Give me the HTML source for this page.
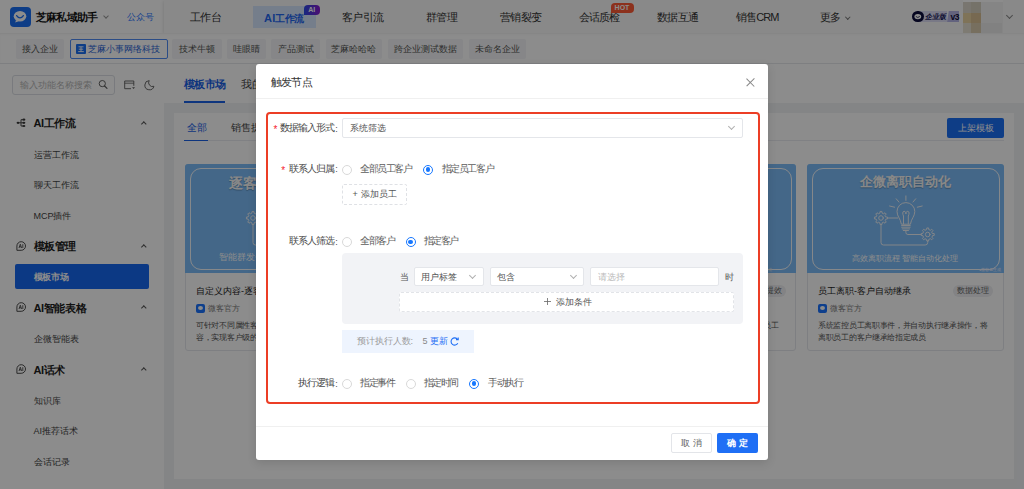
<!DOCTYPE html>
<html><head><meta charset="utf-8">
<style>
*{box-sizing:border-box;margin:0;padding:0}
html,body{width:1024px;height:489px;overflow:hidden}
body{position:relative;background:#f0f2f5;font-family:"Liberation Sans",sans-serif;color:#333}
.a{position:absolute}
.t{position:absolute;white-space:nowrap;line-height:1}
svg{position:absolute;overflow:visible}
/* top nav */
#top{position:absolute;left:0;top:0;width:1024px;height:33px;background:#fff}
#navr{position:absolute;left:164px;top:0;width:860px;height:33px;background:#fafafa;box-shadow:-1px 1px 3px rgba(0,0,0,.1)}
.nav{position:absolute;top:12px;font-size:11px;color:#333;line-height:11px;letter-spacing:-0.7px;white-space:nowrap}
#row2{position:absolute;left:0;top:33px;width:1024px;height:31px;background:#fff;border-bottom:1px solid #e6e8ec;box-shadow:inset 0 2px 3px -2px rgba(0,0,0,.12)}
.tag{position:absolute;top:6px;height:19.5px;background:#f4f5f7;border-radius:2px;font-size:9px;color:#555;line-height:21.5px;text-align:center;white-space:nowrap}
#side{position:absolute;left:0;top:64px;width:164px;height:425px;background:#fff}
.sg{position:absolute;left:33.5px;font-size:11px;font-weight:bold;color:#1f1f1f;line-height:11px;letter-spacing:-0.4px;white-space:nowrap}
.si{position:absolute;left:33.5px;font-size:9px;color:#444;line-height:9px;white-space:nowrap}
.chu{position:absolute;left:141.5px;width:3.6px;height:3.6px;border-left:1px solid #555;border-top:1px solid #555;transform:rotate(45deg)}
#hdr{position:absolute;left:164px;top:64px;width:860px;height:39px;background:#fff}
#panel{position:absolute;left:174px;top:112.5px;width:840px;height:366px;background:#fff}
.card{position:absolute;top:51.5px;width:196.5px;height:187px;border:1px solid #e6e8ed;border-radius:3px;background:#fff}
.cimg{position:absolute;left:-1px;top:-1px;width:196.5px;height:109px;background:#7cbcf8;border-radius:3px 3px 0 0;overflow:hidden}
.cin{position:absolute;left:5px;top:3.6px;width:187.5px;height:102.5px;border:1.5px solid #f4f8fc;border-radius:11px}
.ctit{position:absolute;left:0;width:196px;top:10.5px;text-align:center;font-size:13px;font-weight:bold;color:#f7f7f7;line-height:13px;text-shadow:0 1px 1px rgba(0,0,0,.25);white-space:nowrap}
.csub{position:absolute;left:0;width:196px;top:90.5px;text-align:center;font-size:8px;color:#fff;line-height:8px;white-space:nowrap}
.cname{position:absolute;left:10px;top:121.5px;font-size:9px;color:#222;line-height:9px;white-space:nowrap}
.ctag{position:absolute;top:119.5px;height:12.5px;background:#eeeff2;border-radius:6px;font-size:8px;color:#666;line-height:12.5px;text-align:center;white-space:nowrap}
.cic{position:absolute;left:10px;top:139px;width:8.5px;height:8.5px;background:#1a73ff;border-radius:2px}.cic::after{content:"";position:absolute;left:1.8px;top:2.2px;width:5px;height:3.8px;border-radius:50%;background:#fff}
.cof{position:absolute;left:22px;top:140px;font-size:8px;color:#777;line-height:8px;white-space:nowrap}
.cdesc{position:absolute;left:10px;top:155px;width:180px;font-size:8px;color:#555;line-height:11.8px;letter-spacing:-0.3px}
#mask{position:absolute;left:0;top:0;width:1024px;height:489px;background:rgba(0,0,0,.45)}
#modal{position:absolute;left:256px;top:64px;width:512px;height:395.5px;background:#fff;border-radius:3px;box-shadow:0 3px 10px rgba(0,0,0,.12)}
.lbl{position:absolute;font-size:10px;color:#4a4a4a;line-height:9px;white-space:nowrap;letter-spacing:-0.9px;margin-top:-0.8px}
.req{position:absolute;font-size:10px;color:#f5222d;line-height:10px}
.radio{position:absolute;width:10px;height:10px;border:1px solid #d9d9d9;border-radius:50%;background:#fff}
.radio.on{border-color:#1677ff}
.radio.on::after{content:"";position:absolute;left:1.7px;top:1.7px;width:4.6px;height:4.6px;border-radius:50%;background:#1677ff}
.rt{position:absolute;font-size:10px;color:#5c5c5c;line-height:9px;white-space:nowrap;letter-spacing:-1.4px;margin-top:-0.8px}
.sel{position:absolute;background:#fff;border:1px solid #e4e6ea;border-radius:2px}
.dchev{position:absolute;width:5px;height:5px;border-right:1px solid #b0b0b0;border-bottom:1px solid #b0b0b0;transform:rotate(45deg)}
</style></head><body>

<!-- ============ TOP NAV ============ -->
<div id="top">
  <div class="a" style="left:10px;top:7px;width:20.5px;height:19.5px;background:#1a6ff5;border-radius:4px"></div>
  <svg style="left:10.2px;top:7px" width="20" height="20" viewBox="0 0 20 20">
    <ellipse cx="10" cy="9.2" rx="6.3" ry="5.3" fill="#fff"/>
    <path d="M6 13 L5.2 15.6 L8.6 14.2 Z" fill="#fff"/>
    <path d="M6.6 8.6 Q10 13.2 13.4 8.6" fill="none" stroke="#1a6ff5" stroke-width="1.3" stroke-linecap="round"/>
  </svg>
  <div class="t" style="left:36px;top:12px;font-size:10.5px;font-weight:bold;color:#141414;letter-spacing:-0.8px">芝麻私域助手</div>
  <div class="a" style="left:103.5px;top:14px;width:4px;height:4px;border-right:1px solid #999;border-bottom:1px solid #999;transform:rotate(45deg)"></div>
  <div class="t" style="left:127px;top:12.5px;font-size:9px;color:#2b78ff">公众号</div>
</div>
<div id="navr">
  <div class="nav" style="left:26px">工作台</div>
  <div class="a" style="left:88.5px;top:5.5px;width:63px;height:22.5px;background:#d6e6fd"></div>
  <div class="nav" style="left:100px;top:12.8px;color:#1f66f0;font-weight:bold;font-size:10px;letter-spacing:-0.5px"><span style="letter-spacing:0.2px;font-size:11px">AI</span>工作流</div>
  <div class="a" style="left:140px;top:5px;width:15.5px;height:10px;background:linear-gradient(90deg,#2a4ae8,#8a1ad0);border-radius:4px 4px 4px 0;color:#fff;font-size:7px;font-weight:bold;line-height:10px;text-align:center">AI</div>
  <div class="nav" style="left:178px">客户引流</div>
  <div class="nav" style="left:262px">群管理</div>
  <div class="nav" style="left:336px">营销裂变</div>
  <div class="nav" style="left:414.5px">会话质检</div>
  <div class="a" style="left:446.5px;top:2.5px;width:23px;height:10px;background:#ff5a35;border-radius:4px 4px 4px 0;color:#fff;font-size:7px;font-weight:bold;line-height:10px;text-align:center">HOT</div>
  <div class="nav" style="left:493px">数据互通</div>
  <div class="nav" style="left:572px;letter-spacing:-0.9px">销售CRM</div>
  <div class="nav" style="left:655.5px">更多</div>
  <div class="a" style="left:682px;top:14.5px;width:3.5px;height:3.5px;border-right:1px solid #777;border-bottom:1px solid #777;transform:rotate(45deg)"></div>
  <!-- enterprise badge -->
  <div class="a" style="left:757px;top:10.6px;width:26px;height:11.7px;background:#dcdcf5"></div>
  <div class="a" style="left:783px;top:10.6px;width:12.2px;height:11.7px;background:#b4b4e6;clip-path:polygon(15% 0,100% 0,100% 100%,0 100%)"></div>
  <div class="a" style="left:748px;top:10.8px;width:11.6px;height:11.6px;background:#0b0b3b;border-radius:50%"></div>
  <svg style="left:748px;top:10.8px" width="12" height="12" viewBox="0 0 12 12">
    <ellipse cx="5.8" cy="5.6" rx="3.4" ry="2.6" fill="#fff"/>
    <path d="M3.8 5.4 Q5.8 7.6 7.8 5.4" fill="none" stroke="#0b0b3b" stroke-width="0.8"/>
  </svg>
  <div class="t" style="left:761.5px;top:12.8px;font-size:7px;font-weight:bold;color:#1a1a5a;letter-spacing:0px;transform:skewX(-14deg)">企业版</div>
  <div class="t" style="left:786.5px;top:12.5px;font-size:8.5px;font-weight:bold;color:#10103a;letter-spacing:-0.5px">v3</div>
  <!-- mosaic avatar -->
  <div class="a" style="left:799px;top:0;width:39.5px;height:33px;background:#f2f2f2"></div>
  <div class="a" style="left:799px;top:2px;width:8px;height:11px;background:#ddd8cc"></div>
  <div class="a" style="left:807px;top:2px;width:10px;height:11px;background:#d6cfbf"></div>
  <div class="a" style="left:799px;top:13px;width:8px;height:10px;background:#e8d2a0"></div>
  <div class="a" style="left:807px;top:13px;width:10px;height:10px;background:#d9c094"></div>
  <div class="a" style="left:799px;top:23px;width:8px;height:10px;background:#e6e0d2"></div>
  <div class="a" style="left:807px;top:23px;width:10px;height:10px;background:#d9cbae"></div>
  <div class="a" style="left:817px;top:23px;width:21px;height:10px;background:#ebebeb"></div>
  <div class="a" style="left:799px;top:0;width:39.5px;height:1.5px;background:#fff"></div>
  <div class="a" style="left:842.5px;top:13px;width:5px;height:5px;border-right:1px solid #888;border-bottom:1px solid #888;transform:rotate(45deg)"></div>
</div>

<div id="row2">
  <div class="tag" style="left:16px;width:48px">接入企业</div>
  <div class="tag" style="left:69.5px;top:5.5px;width:98px;height:20.5px;background:#fff;border:1px solid #4f8af5;color:#2c66d6;line-height:19px;text-align:left;padding-left:17.5px">芝麻小事网络科技</div>
  <div class="a" style="left:76px;top:10.5px;width:10px;height:10px;background:#1a6ff5;border-radius:1px"></div>
  <svg style="left:76px;top:10.5px" width="10" height="10" viewBox="0 0 10 10"><path d="M2.5 2.8 H7.5 M5 2.8 V7.6 M2.8 5.2 H7.2 M2.2 7.6 H7.8" stroke="#fff" stroke-width="0.9"/></svg>
  <div class="tag" style="left:171.5px;width:50px">技术牛顿</div>
  <div class="tag" style="left:226.5px;width:39px">哇眼睛</div>
  <div class="tag" style="left:271px;width:49px">产品测试</div>
  <div class="tag" style="left:325.5px;width:56px">芝麻哈哈哈</div>
  <div class="tag" style="left:387.5px;width:75px">跨企业测试数据</div>
  <div class="tag" style="left:468.5px;width:57px">未命名企业</div>
</div>

<!-- ============ SIDEBAR ============ -->
<div id="side">
  <div class="a" style="left:12px;top:11px;width:102.5px;height:19.5px;border:1px solid #dcdfe5;border-radius:3px"></div>
  <div class="t" style="left:19.5px;top:16.5px;font-size:9px;color:#b5b5b5">输入功能名称搜索</div>
  <svg style="left:98px;top:15px" width="12" height="12" viewBox="0 0 12 12">
    <circle cx="4.3" cy="4.6" r="3.1" fill="none" stroke="#5a5a5a" stroke-width="0.95"/>
    <path d="M6.6 7 L9 9.4" stroke="#5a5a5a" stroke-width="1.1" stroke-linecap="round"/>
  </svg>
  <svg style="left:124px;top:16px" width="12" height="10" viewBox="0 0 12 10">
    <path d="M9.8 5.8 V1 H0.7 V8.7 H7" fill="none" stroke="#5a5a5a" stroke-width="0.9"/>
    <path d="M0.7 3.2 H9.8" stroke="#5a5a5a" stroke-width="0.8"/>
    <path d="M8.1 7.2 H11 L9.55 8.9 Z" fill="#5a5a5a"/>
  </svg>
  <svg style="left:144px;top:15.5px" width="11" height="11" viewBox="0 0 11 11">
    <path d="M5.2 0.6 A4.6 4.6 0 1 0 9.9 6.3 A3.9 3.9 0 0 1 5.2 0.6 Z" fill="none" stroke="#5a5a5a" stroke-width="0.9" stroke-linejoin="round"/>
  </svg>

  <svg style="left:15.5px;top:54px" width="10" height="10" viewBox="0 0 10 10">
    <ellipse cx="2" cy="4.8" rx="1.4" ry="1.1" fill="#3a3a3a"/>
    <path d="M2 4.8 H7 M5 1.7 V8 M5 1.7 H7 M5 8 H7" fill="none" stroke="#3a3a3a" stroke-width="0.9"/>
    <ellipse cx="7.9" cy="1.7" rx="1.5" ry="1.1" fill="#3a3a3a"/><ellipse cx="7.9" cy="4.8" rx="1.5" ry="1.1" fill="#3a3a3a"/><ellipse cx="7.9" cy="8" rx="1.5" ry="1.1" fill="#3a3a3a"/>
  </svg>
  <div class="sg" style="top:54px">AI工作流</div>
  <div class="chu" style="top:58px"></div>
  <div class="si" style="top:86.5px">运营工作流</div>
  <div class="si" style="top:117px">聊天工作流</div>
  <div class="si" style="top:147.5px">MCP插件</div>

  <svg style="left:15.6px;top:177px" width="10" height="10" viewBox="0 0 10 10">
    <path d="M0.9 5 A4.3 4.3 0 1 1 5.2 9.3 H0.9 Z" fill="none" stroke="#3a3a3a" stroke-width="0.9" stroke-linejoin="round"/>
    <path d="M3 7 L4.3 3.2 L5.6 7 M3.5 5.8 H5.1 M6.8 3.2 V7" fill="none" stroke="#3a3a3a" stroke-width="0.8"/>
  </svg>
  <div class="sg" style="top:177px">模板管理</div>
  <div class="chu" style="top:181px"></div>
  <div class="a" style="left:15px;top:199.8px;width:134px;height:25.2px;background:#1668f0;border-radius:2px"></div>
  <div class="si" style="top:209px;color:#fff;font-weight:bold;letter-spacing:-0.2px">模板市场</div>

  <svg style="left:15.6px;top:238px" width="10" height="10" viewBox="0 0 10 10">
    <path d="M0.9 5 A4.3 4.3 0 1 1 5.2 9.3 H0.9 Z" fill="none" stroke="#3a3a3a" stroke-width="0.9" stroke-linejoin="round"/>
    <path d="M3 7 L4.3 3.2 L5.6 7 M3.5 5.8 H5.1 M6.8 3.2 V7" fill="none" stroke="#3a3a3a" stroke-width="0.8"/>
  </svg>
  <div class="sg" style="top:238.5px">AI智能表格</div>
  <div class="chu" style="top:242px"></div>
  <div class="si" style="top:271px">企微智能表</div>

  <svg style="left:15.6px;top:300px" width="10" height="10" viewBox="0 0 10 10">
    <path d="M0.9 5 A4.3 4.3 0 1 1 5.2 9.3 H0.9 Z" fill="none" stroke="#3a3a3a" stroke-width="0.9" stroke-linejoin="round"/>
    <path d="M3 7 L4.3 3.2 L5.6 7 M3.5 5.8 H5.1 M6.8 3.2 V7" fill="none" stroke="#3a3a3a" stroke-width="0.8"/>
  </svg>
  <div class="sg" style="top:300.5px">AI话术</div>
  <div class="chu" style="top:304px"></div>
  <div class="si" style="top:333px">知识库</div>
  <div class="si" style="top:363px">AI推荐话术</div>
  <div class="si" style="top:394px">会话记录</div>
  </div>

<!-- ============ HEADER TABS ============ -->
<div id="hdr">
  <div class="t" style="left:20px;top:14.5px;font-size:11px;font-weight:bold;color:#1a62e6;letter-spacing:-0.7px">模板市场</div>
  <div class="a" style="left:20px;top:37px;width:41px;height:2px;background:#1a62e6"></div>
  <div class="t" style="left:77px;top:14.5px;font-size:11px;color:#444;letter-spacing:-0.5px">我的模板</div>
</div>

<!-- ============ PANEL ============ -->
<div id="panel">
  <div class="t" style="left:12.5px;top:10.5px;font-size:9.5px;color:#1a62e6">全部</div>
  <div class="t" style="left:56.5px;top:10.5px;font-size:9.5px;color:#444">销售提效</div>
  <div class="a" style="left:10px;top:27.5px;width:820px;height:1px;background:#eaecf0"></div>
  <div class="a" style="left:10px;top:27px;width:23.5px;height:1.6px;background:#1a62e6"></div>
  <div class="a" style="left:773px;top:5px;width:57px;height:20.5px;background:#1a6ff5;border-radius:2px;color:#fff;font-size:9px;line-height:20.5px;text-align:center">上架模板</div>

  <div class="card" style="left:11px">
    <div class="cimg"><div class="cin"></div>
      <div class="ctit" style="font-size:14px;letter-spacing:-0.5px;top:13px">逐客令内容自动化</div>
      <svg style="left:-6px;top:0" width="196" height="108" viewBox="0 0 196 108">
        <g fill="none" stroke="#eef3f8" stroke-width="1" stroke-linecap="round" stroke-linejoin="round">
          <path d="M98.9 31.9 V36.4 M89.2 34.8 L91.9 38 M108.7 34.8 L106 38 M82.6 42 L87.6 43.2 M115.2 42 L110.3 43.2"/>
          <path d="M94.3 59.8 C93.8 55 90 52.5 90 47.5 A8.9 8.9 0 0 1 107.8 47.5 C107.8 52.5 104 55 103.5 59.8 Z"/>
          <path d="M96.5 59.8 V52 C95.5 50 95.3 47.5 97 47.3 C98.6 47.1 98.9 48.8 98.9 50 C98.9 48.8 99.2 47.1 100.8 47.3 C102.5 47.5 102.3 50 101.3 52 V59.8"/>
          <path d="M94.6 61.5 H103.2 M94.6 63.2 H103.2 M95.2 64.9 H102.6 M96.3 66.5 H101.5"/>
          <path d="M98.9 66.5 V68.5 Q98.9 70.5 100.9 70.5 H114.2"/>
          <path d="M80.5 54 H90.6"/>
          <path d="M74 60.5 V78.5 Q74 81 76.5 81 H118.2 Q120.7 81 120.7 78.5 V77"/>
          <circle cx="74" cy="54" r="2.3"/>
          <circle cx="120.7" cy="70.5" r="2.3"/>
          <path d="M78.88 52.93 L80.54 53.10 L80.54 54.90 L78.88 55.07 L78.21 56.70 L79.26 57.98 L77.98 59.26 L76.70 58.21 L75.07 58.88 L74.90 60.54 L73.10 60.54 L72.93 58.88 L71.30 58.21 L70.02 59.26 L68.74 57.98 L69.79 56.70 L69.12 55.07 L67.46 54.90 L67.46 53.10 L69.12 52.93 L69.79 51.30 L68.74 50.02 L70.02 48.74 L71.30 49.79 L72.93 49.12 L73.10 47.46 L74.90 47.46 L75.07 49.12 L76.70 49.79 L77.98 48.74 L79.26 50.02 L78.21 51.30 Z"/>
          <path d="M125.58 69.43 L127.24 69.60 L127.24 71.40 L125.58 71.57 L124.91 73.20 L125.96 74.48 L124.68 75.76 L123.40 74.71 L121.77 75.38 L121.60 77.04 L119.80 77.04 L119.63 75.38 L118.00 74.71 L116.72 75.76 L115.44 74.48 L116.49 73.20 L115.82 71.57 L114.16 71.40 L114.16 69.60 L115.82 69.43 L116.49 67.80 L115.44 66.52 L116.72 65.24 L118.00 66.29 L119.63 65.62 L119.80 63.96 L121.60 63.96 L121.77 65.62 L123.40 66.29 L124.68 65.24 L125.96 66.52 L124.91 67.80 Z"/>
        </g>
      </svg>
      <div class="csub" style="font-size:9px;top:88.5px">智能群发个性内容 精准触达客户</div>
    </div>
    <div class="cname">自定义内容-逐客令智能群发</div>
    <div class="cic"></div><div class="cof">微客官方</div>
    <div class="cdesc">可针对不同属性客户自定义发送不同的群发消息内<br>容，实现客户级的精准触达</div>
  </div>
  <div class="card" style="left:218.3px">
    <div class="cimg"><div class="cin"></div></div>
  </div>
  <div class="card" style="left:425.6px">
    <div class="cimg"><div class="cin"></div>
      <div class="t" style="left:150px;top:104px;font-size:4px;color:#dde6f0">●微客AI生成</div>
    </div>
    <div class="ctag" style="left:145px;width:40.5px">销售提效</div>
    <div class="t" style="left:146px;top:157px;font-size:8px;color:#555">指定员工</div>
  </div>
  <div class="card" style="left:633px">
    <div class="cimg"><div class="cin"></div>
      <div class="ctit">企微离职自动化</div>
      <svg style="left:0;top:0" width="196" height="108" viewBox="0 0 196 108">
        <g fill="none" stroke="#eef3f8" stroke-width="1" stroke-linecap="round" stroke-linejoin="round">
          <path d="M98.9 31.9 V36.4 M89.2 34.8 L91.9 38 M108.7 34.8 L106 38 M82.6 42 L87.6 43.2 M115.2 42 L110.3 43.2"/>
          <path d="M94.3 59.8 C93.8 55 90 52.5 90 47.5 A8.9 8.9 0 0 1 107.8 47.5 C107.8 52.5 104 55 103.5 59.8 Z"/>
          <path d="M96.5 59.8 V52 C95.5 50 95.3 47.5 97 47.3 C98.6 47.1 98.9 48.8 98.9 50 C98.9 48.8 99.2 47.1 100.8 47.3 C102.5 47.5 102.3 50 101.3 52 V59.8"/>
          <path d="M94.6 61.5 H103.2 M94.6 63.2 H103.2 M95.2 64.9 H102.6 M96.3 66.5 H101.5"/>
          <path d="M98.9 66.5 V68.5 Q98.9 70.5 100.9 70.5 H114.2"/>
          <path d="M80.5 54 H90.6"/>
          <path d="M74 60.5 V78.5 Q74 81 76.5 81 H118.2 Q120.7 81 120.7 78.5 V77"/>
          <circle cx="74" cy="54" r="2.3"/>
          <circle cx="120.7" cy="70.5" r="2.3"/>
          <path d="M78.88 52.93 L80.54 53.10 L80.54 54.90 L78.88 55.07 L78.21 56.70 L79.26 57.98 L77.98 59.26 L76.70 58.21 L75.07 58.88 L74.90 60.54 L73.10 60.54 L72.93 58.88 L71.30 58.21 L70.02 59.26 L68.74 57.98 L69.79 56.70 L69.12 55.07 L67.46 54.90 L67.46 53.10 L69.12 52.93 L69.79 51.30 L68.74 50.02 L70.02 48.74 L71.30 49.79 L72.93 49.12 L73.10 47.46 L74.90 47.46 L75.07 49.12 L76.70 49.79 L77.98 48.74 L79.26 50.02 L78.21 51.30 Z"/>
          <path d="M125.58 69.43 L127.24 69.60 L127.24 71.40 L125.58 71.57 L124.91 73.20 L125.96 74.48 L124.68 75.76 L123.40 74.71 L121.77 75.38 L121.60 77.04 L119.80 77.04 L119.63 75.38 L118.00 74.71 L116.72 75.76 L115.44 74.48 L116.49 73.20 L115.82 71.57 L114.16 71.40 L114.16 69.60 L115.82 69.43 L116.49 67.80 L115.44 66.52 L116.72 65.24 L118.00 66.29 L119.63 65.62 L119.80 63.96 L121.60 63.96 L121.77 65.62 L123.40 66.29 L124.68 65.24 L125.96 66.52 L124.91 67.80 Z"/>
        </g>
      </svg>
      <div class="csub" style="font-size:7.8px">高效离职流程 智能自动化处理</div>
      <div class="t" style="left:172px;top:104px;font-size:4px;color:#eef">●微客AI生成</div>
    </div>
    <div class="cname">员工离职-客户自动继承</div>
    <div class="ctag" style="left:145px;width:40px">数据处理</div>
    <div class="cic"></div><div class="cof">微客官方</div>
    <div class="cdesc">系统监控员工离职事件，并自动执行继承操作，将<br>离职员工的客户继承给指定成员</div>
  </div>
</div>

<div id="mask"></div>

<!-- ============ MODAL ============ -->
<div id="modal">
  <div class="t" style="left:15px;top:13px;font-size:11px;color:#333;letter-spacing:-0.8px">触发节点</div>
  <div class="a" style="left:490.5px;top:14px;width:8px;height:8px">
    <div class="a" style="left:-1.3px;top:3.6px;width:10.6px;height:0.8px;background:#888;transform:rotate(45deg)"></div>
    <div class="a" style="left:-1.3px;top:3.6px;width:10.6px;height:0.8px;background:#888;transform:rotate(-45deg)"></div>
  </div>
  <div class="a" style="left:0;top:34.3px;width:512px;height:1px;background:#f0f0f0"></div>
  <div class="a" style="left:10px;top:48px;width:493.5px;height:291.6px;border:2.5px solid #ec3e25;border-radius:4px"></div>

  <!-- row1 -->
  <div class="req" style="left:17.5px;top:61.2px">*</div>
  <div class="lbl" style="left:23.5px;top:59.7px">数据输入形式</div>
  <div class="sel" style="left:86px;top:54.3px;width:400.6px;height:19.8px"></div>
  <div class="t" style="left:93.5px;top:59.7px;font-size:9px;color:#555">系统筛选</div>
  <div class="dchev" style="left:472.5px;top:59.8px"></div>
  <!-- row2 -->
  <div class="t" style="left:79.3px;top:60.5px;font-size:9px;color:#4a4a4a">:</div>
  <div class="req" style="left:25.3px;top:102px">*</div>
  <div class="lbl" style="left:32.5px;top:100.5px">联系人归属</div>
  <div class="radio" style="left:86px;top:100.5px"></div>
  <div class="rt" style="left:104px;top:100.5px">全部员工客户</div>
  <div class="radio on" style="left:167.2px;top:100.5px"></div>
  <div class="rt" style="left:185.5px;top:100.5px">指定员工客户</div>
  <div class="a" style="left:86px;top:120px;width:64.7px;height:20.6px;border:1px dashed #dfe1e5;border-radius:2px"></div>
  <div class="t" style="left:96.5px;top:125.5px;font-size:9px;color:#555">+</div>
  <div class="t" style="left:104.5px;top:125.5px;font-size:9px;color:#555">添加员工</div>
  <!-- row3 -->
  <div class="t" style="left:79.3px;top:101.3px;font-size:9px;color:#4a4a4a">:</div>
  <div class="t" style="left:79.3px;top:173.8px;font-size:9px;color:#4a4a4a">:</div>
  <div class="lbl" style="left:33px;top:173px">联系人筛选</div>
  <div class="radio" style="left:86px;top:173px"></div>
  <div class="rt" style="left:104px;top:173px">全部客户</div>
  <div class="radio on" style="left:149.7px;top:173px"></div>
  <div class="rt" style="left:167.5px;top:173px">指定客户</div>
  <div class="a" style="left:86px;top:189.2px;width:400.8px;height:71.1px;background:#f2f3f6;border-radius:4px"></div>
  <div class="t" style="left:144px;top:208.8px;font-size:9px;color:#555">当</div>
  <div class="sel" style="left:157.5px;top:202.5px;width:70px;height:19px"></div>
  <div class="t" style="left:165px;top:208.8px;font-size:9px;color:#555">用户标签</div>
  <div class="dchev" style="left:213.5px;top:209px"></div>
  <div class="sel" style="left:234px;top:202.5px;width:94.3px;height:19px"></div>
  <div class="t" style="left:240.5px;top:208.8px;font-size:9px;color:#555">包含</div>
  <div class="dchev" style="left:315px;top:209px"></div>
  <div class="sel" style="left:334.4px;top:202.5px;width:129px;height:19px"></div>
  <div class="t" style="left:341.5px;top:208.8px;font-size:9px;color:#bbb">请选择</div>
  <div class="t" style="left:469px;top:208.8px;font-size:9px;color:#555">时</div>
  <div class="a" style="left:143.4px;top:227.5px;width:335px;height:20.5px;border:1px dashed #e2e4e8;border-radius:2px;background:#fff"></div>
  <svg style="left:287.5px;top:233.5px" width="7" height="7" viewBox="0 0 7 7"><path d="M3.5 0 V7 M0 3.5 H7" stroke="#666" stroke-width="0.8"/></svg>
  <div class="t" style="left:299.5px;top:233.5px;font-size:9px;color:#555">添加条件</div>
  <div class="a" style="left:86px;top:266.2px;width:132px;height:22.6px;background:#eef4fe"></div>
  <div class="t" style="left:101px;top:273px;font-size:9px;color:#999;letter-spacing:-0.1px">预计执行人数:</div>
  <div class="t" style="left:166.5px;top:273px;font-size:9px;color:#888">5</div>
  <div class="t" style="left:174px;top:273px;font-size:9px;color:#1f6ff5">更新</div>
  <svg style="left:194px;top:273px" width="9" height="9" viewBox="0 0 9 9"><path d="M7.6 2.4 A3.6 3.6 0 1 0 7.8 6.3" fill="none" stroke="#1f6ff5" stroke-width="1.1"/><path d="M6 2.6 L8.2 2.6 L8.2 0.4" fill="none" stroke="#1f6ff5" stroke-width="1.1"/></svg>
  <!-- row4 -->
  <div class="t" style="left:79.3px;top:315.6px;font-size:9px;color:#4a4a4a">:</div>
  <div class="lbl" style="left:41.5px;top:314.8px">执行逻辑</div>
  <div class="radio" style="left:86px;top:314.8px"></div>
  <div class="rt" style="left:104px;top:314.8px">指定事件</div>
  <div class="radio" style="left:149.7px;top:314.8px"></div>
  <div class="rt" style="left:167.5px;top:314.8px">指定时间</div>
  <div class="radio on" style="left:213.2px;top:314.8px"></div>
  <div class="rt" style="left:232px;top:314.8px">手动执行</div>

  <div class="a" style="left:0;top:362px;width:512px;height:1px;background:#f0f0f0"></div>
  <div class="a" style="left:415px;top:369.2px;width:40.6px;height:20px;border:1px solid #e3e5e9;border-radius:2px;font-size:9px;color:#606060;line-height:18px;text-align:center;letter-spacing:2.5px;text-indent:2.5px">取消</div>
  <div class="a" style="left:461.4px;top:369.2px;width:40.5px;height:20px;background:#1f6ff5;border-radius:2px;font-size:9px;color:#fff;line-height:20px;text-align:center;letter-spacing:2.5px;text-indent:2.5px;font-weight:bold;-webkit-text-stroke:0px">确定</div>
</div>

</body></html>
